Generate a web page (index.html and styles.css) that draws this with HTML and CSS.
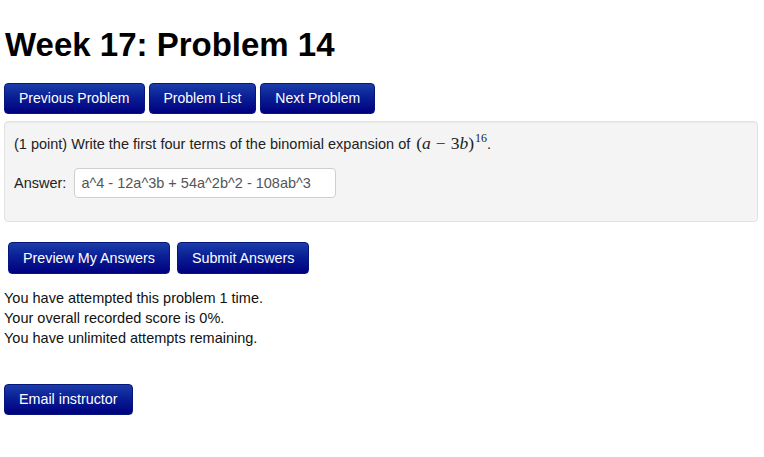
FILE: index.html
```html
<!DOCTYPE html>
<html>
<head>
<meta charset="utf-8">
<link rel="stylesheet" href="styles.css">
</head>
<body>
<div class="page">
  <h1 class="title">Week 17: Problem 14</h1>
  <div class="nav">
    <button class="btn">Previous Problem</button>
    <button class="btn">Problem List</button>
    <button class="btn">Next Problem</button>
  </div>
  <div class="well">
    <p class="question">(1 point) Write the first four terms of the binomial expansion of <span class="math"><span class="paren">(</span><i>a</i><span class="minus">−</span>3<i>b</i><span class="paren">)</span><sup>16</sup></span>.</p>
    <div class="answer-row">
      <label class="answer-label">Answer:</label>
      <div class="answer-input">a^4 - 12a^3b + 54a^2b^2 - 108ab^3</div>
    </div>
  </div>
  <div class="submit-row">
    <button class="btn btn-lg">Preview My Answers</button>
    <button class="btn btn-lg">Submit Answers</button>
  </div>
  <div class="status">
    <div>You have attempted this problem 1 time.</div>
    <div>Your overall recorded score is 0%.</div>
    <div>You have unlimited attempts remaining.</div>
  </div>
  <div class="email">
    <button class="btn btn-wide">Email instructor</button>
  </div>
</div>
</body>
</html>
```

FILE: styles.css
```css
html, body {
  margin: 0;
  padding: 0;
  background: #fff;
}
body {
  font-family: "Liberation Sans", Arial, Helvetica, sans-serif;
  font-size: 14.5px;
  color: #222;
}
.page {
  padding: 0 6px 0 4px;
}
.title {
  margin: 0;
  padding-top: 26px;
  font-size: 33px;
  line-height: 37px;
  font-weight: bold;
  color: #000;
  padding-left: 1px;
}
.nav {
  display: flex;
  gap: 4px;
  margin-top: 20px;
}
.btn {
  font-family: "Liberation Sans", Arial, Helvetica, sans-serif;
  font-size: 14px;
  line-height: 17px;
  color: #fff;
  background: linear-gradient(to bottom, #1b3da9 0%, #0a1f95 45%, #00007f 100%);
  border: 1px solid #06167a;
  border-radius: 4px;
  padding: 6px 14px 6px;
  height: 31px;
  cursor: pointer;
  margin: 0;
}
.well {
  margin-top: 7px;
  background: #f4f4f4;
  border: 1px solid #e2e2e2;
  border-radius: 4px;
  box-shadow: inset 0 1px 1px rgba(0,0,0,0.04);
  padding: 11px 9px 23px;
}
.question {
  margin: 0;
  line-height: 20px;
  color: #222;
}
.math {
  font-family: "Liberation Serif", "Times New Roman", serif;
  font-size: 17.5px;
  margin-left: 2px;
}
.math i {
  font-style: italic;
}
.math .minus {
  margin: 0 5px;
}
.math sup {
  font-size: 12px;
  vertical-align: 7px;
  line-height: 0;
  margin-left: 1px;
}
.answer-row {
  display: flex;
  align-items: center;
  gap: 8px;
  margin-top: 14px;
}
.answer-label {
  color: #222;
}
.answer-input {
  width: 262px;
  height: 30px;
  box-sizing: border-box;
  padding: 0 6px;
  display: flex;
  align-items: center;
  background: #fff;
  border: 1px solid #cfcfcf;
  border-radius: 4px;
  color: #555;
  font-size: 14.5px;
}
.submit-row {
  display: flex;
  gap: 7px;
  margin-top: 20px;
  padding-left: 4px;
}
.btn-lg {
  height: 32px;
  font-size: 14.3px;
  padding: 6px 14px;
}
.btn-wide {
  font-size: 14.3px;
}
.status {
  margin-top: 14px;
  line-height: 20px;
  color: #111;
}
.email {
  margin-top: 36px;
}
```
